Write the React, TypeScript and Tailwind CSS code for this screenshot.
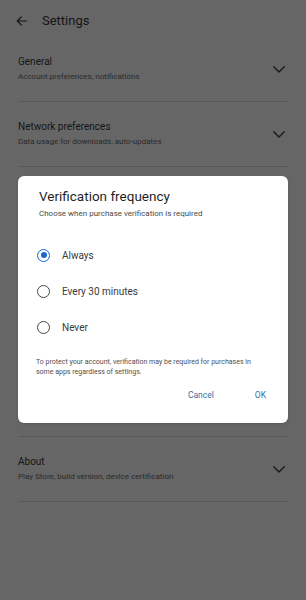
import React from "react";

function Chevron() {
  return (
    <svg width="18" height="18" viewBox="0 0 24 24" fill="none" stroke="#1c1c1c" strokeWidth="2" strokeLinecap="round" strokeLinejoin="round">
      <path d="M5 9l7 7 7-7" />
    </svg>
  );
}

function Row({ title, sub }: { title: string; sub: string }) {
  return (
    <div className="mx-[18px] border-b border-[#585858]">
      <div className="flex items-center justify-between pt-[18px] pb-[18px]">
        <div className="flex flex-col gap-[2px]">
          <div className="text-[10px] leading-[14px] text-[#151515]">{title}</div>
          <div className="text-[8px] leading-[12px] text-[#2a2a2a]">{sub}</div>
        </div>
        <Chevron />
      </div>
    </div>
  );
}

function Radio({ label, checked }: { label: string; checked?: boolean }) {
  return (
    <div className="flex items-center h-[36px]">
      <div className="w-[13px] h-[13px] ml-[-1px] rounded-full flex items-center justify-center border-[1.6px] border-solid" style={{ borderColor: checked ? "#1a66cc" : "#444746" }}>
        {checked ? <div className="w-[6px] h-[6px] rounded-full bg-[#1a66cc]" /> : null}
      </div>
      <div className="ml-[12px] text-[10px] text-[#3a3a3a]">{label}</div>
    </div>
  );
}

export default function App() {
  return (
    <div className="relative w-[306px] h-[600px] bg-[#666666] overflow-hidden" style={{ fontFamily: "Roboto, 'Noto Sans', sans-serif" }}>
      <div className="flex items-center h-[41px] pl-[15px]">
        <svg width="14" height="14" viewBox="0 0 24 24" fill="none" stroke="#151515" strokeWidth="2" strokeLinecap="round" strokeLinejoin="round">
          <path d="M20 12H4M11 5l-7 7 7 7" />
        </svg>
        <span className="ml-[13px] text-[13px] text-[#151515]">Settings</span>
      </div>
      <div className="mt-[-4px]">
        <Row title="General" sub="Account preferences, notifications" />
        <Row title="Network preferences" sub="Data usage for downloads, auto-updates" />
        <div className="h-[65px] mx-[18px] border-b border-[#585858]" />
        <div className="h-[65px] mx-[18px] border-b border-[#585858]" />
        <div className="h-[74px] mx-[18px] border-b border-[#585858]" />
        <div className="h-[66px] mx-[18px] border-b border-[#585858]" />
        <Row title="About" sub="Play Store, build version, device certification" />
      </div>

      <div className="absolute left-[18px] top-[176px] w-[270px] h-[247px] bg-white rounded-[6px] shadow-sm">
        <div className="pl-[21px] pt-[12px]">
          <div className="text-[13.5px] leading-[16px] text-[#1f1f1f]">Verification frequency</div>
          <div className="mt-[4px] text-[8px] leading-[12px] text-[#4a4a4a]">Choose when purchase verification is required</div>
        </div>
        <div className="pl-[20px] mt-[17px]">
          <Radio label="Always" checked />
          <Radio label="Every 30 minutes" />
          <Radio label="Never" />
        </div>
        <div className="pl-[18px] pr-[20px] mt-[12px] text-[7px] leading-[10px] text-[#505050]">
          To protect your account, verification may be required for purchases in some apps regardless of settings.
        </div>
        <div className="flex justify-end items-center mt-[12px] pr-[22px] text-[8.5px] text-[#3a6e9e]">
          <span>Cancel</span>
          <span className="ml-[41px]">OK</span>
        </div>
      </div>
    </div>
  );
}
